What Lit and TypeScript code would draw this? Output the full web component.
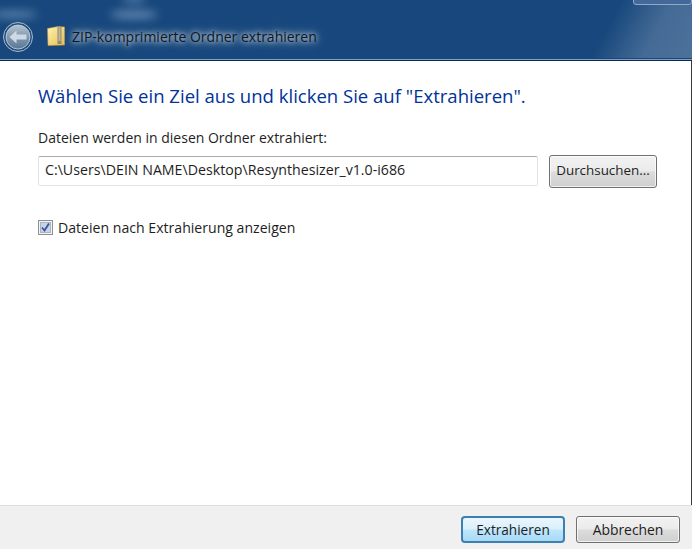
import { LitElement, html, css } from "lit";
import { customElement } from "lit/decorators.js";

@customElement("app-root")
export class AppRoot extends LitElement {
  static styles = css`
    :host {
      display: flex;
      flex-direction: column;
      width: 692px;
      height: 549px;
      overflow: hidden;
      background: #fff;
      font-family: "Open Sans", "Noto Sans", sans-serif;
      color: #1e1e1e;
      box-sizing: border-box;
    }
    .titlebar {
      position: relative;
      flex: none;
      height: 61px;
      box-sizing: border-box;
      display: flex;
      align-items: flex-start;
      padding: 22px 0 0 3px;
      overflow: hidden;
      background: #17477c;
      border-bottom: 1px solid #0e2a4a;
      box-shadow: inset 0 -1px 0 #7f9fc0;
    }
    .glare {
      position: absolute;
      inset: 0 0 2px 0;
      background: linear-gradient(118deg, transparent 86%, rgba(130, 155, 185, 0.42) 93%, rgba(130, 155, 185, 0.5) 100%);
    }
    .blur {
      position: absolute;
      border-radius: 50%;
      background: rgba(170, 195, 225, 0.5);
      filter: blur(5px);
    }
    .b1 { left: -10px; top: 11px; width: 48px; height: 7px; }
    .b2 { left: 110px; top: 10px; width: 48px; height: 9px; }
    .b3 { left: 122px; top: -5px; width: 24px; height: 7px; }
    .winbtn {
      position: absolute;
      right: 0;
      top: -6px;
      width: 59px;
      height: 11px;
      box-sizing: border-box;
      border: 1px solid #8fa9c6;
      border-radius: 3px;
      background: #44689a;
    }
    .back {
      position: relative;
      flex: none;
      width: 30px;
      height: 30px;
    }
    .back svg, .zip { display: block; }
    .zip {
      flex: none;
      position: relative;
      margin: 4px 0 0 14px;
    }
    .title {
      position: relative;
      margin: 5px 0 0 7px;
      font-size: 14px;
      line-height: 19px;
      color: #0d1826;
      white-space: nowrap;
      text-shadow: 0 0 5px rgba(255,255,255,.8), 0 0 9px rgba(255,255,255,.65), 0 0 14px rgba(255,255,255,.5);
    }
    .content {
      flex: 1;
      min-height: 0;
      box-sizing: border-box;
      padding: 22px 35px 0 38px;
      border-right: 1px solid #3a3a3a;
      display: flex;
      flex-direction: column;
    }
    h1 {
      margin: 0;
      font-weight: 400;
      font-size: 18.55px;
      line-height: 26px;
      color: #003399;
      white-space: nowrap;
    }
    .label {
      margin-top: 19px;
      font-size: 14px;
      line-height: 19px;
      white-space: nowrap;
    }
    .row {
      display: flex;
      align-items: flex-start;
      gap: 11px;
      margin-top: 9px;
    }
    .input {
      flex: none;
      width: 500px;
      height: 30px;
      box-sizing: border-box;
      border: 1px solid #e2e3e6;
      border-top-color: #ababab;
      border-radius: 2px;
      padding-left: 6px;
      font-size: 14.2px;
      line-height: 25px;
      white-space: nowrap;
    }
    .btn {
      flex: none;
      box-sizing: border-box;
      display: flex;
      align-items: center;
      justify-content: center;
      border: 1px solid #707070;
      border-radius: 3px;
      background: linear-gradient(#f2f2f2 0%, #ebebeb 48%, #dcdcdc 52%, #cfcfcf 100%);
      box-shadow: inset 0 0 0 1px rgba(255,255,255,.7);
      font-size: 13.6px;
      white-space: nowrap;
    }
    .browse { width: 108px; height: 33px; margin-top: -1px; font-size: 13.4px; padding-bottom: 4px; }
    .check {
      display: flex;
      align-items: center;
      gap: 5px;
      margin-top: 30px;
      font-size: 14.1px;
      line-height: 19px;
      white-space: nowrap;
    }
    .box { display: block; flex: none; }
    .footer {
      flex: none;
      height: 44px;
      box-sizing: border-box;
      display: flex;
      justify-content: flex-end;
      align-items: flex-start;
      gap: 11px;
      padding: 10px 12px 0 0;
      background: #f0f0f0;
      border-top: 1px solid #dfdfdf;
    }
    .action { height: 27px; }
    .primary {
      width: 104px;
      border-color: #3c7fb1;
      border-width: 2px;
      border-radius: 4px;
      background: linear-gradient(#eaf6fd 0%, #d9f0fc 48%, #bee6fd 52%, #a7d9f5 100%);
      box-shadow: none;
    }
    .secondary { width: 104px; font-size: 13.9px; }
  `;

  render() {
    return html`
      <div class="titlebar">
        <div class="glare"></div>
        <div class="blur b1"></div>
        <div class="blur b2"></div>
        <div class="blur b3"></div>
        <div class="winbtn"></div>
        <div class="back">
          <svg width="30" height="30" viewBox="0 0 30 30">
            <defs>
              <linearGradient id="bg" x1="0" y1="0" x2="0" y2="1">
                <stop offset="0" stop-color="#b4c2d0" />
                <stop offset=".5" stop-color="#8298b0" />
                <stop offset="1" stop-color="#587896" />
              </linearGradient>
            </defs>
            <circle cx="15" cy="15" r="14.5" fill="#24507f" stroke="#a9bbcd" stroke-width="1" />
            <circle cx="15" cy="15" r="12" fill="url(#bg)" stroke="#c8d4df" stroke-width="0.8" />
            <path d="M6.5 15 L13.5 8.5 L13.5 12.5 L23.5 12.5 L23.5 17.5 L13.5 17.5 L13.5 21.5 Z" fill="#cfd9e3" />
          </svg>
        </div>
        <svg class="zip" width="18" height="20" viewBox="0 0 18 20">
          <defs>
            <linearGradient id="fd" x1="0" y1="0" x2="1" y2="1">
              <stop offset="0" stop-color="#fdf3b4" />
              <stop offset="1" stop-color="#e9bd4e" />
            </linearGradient>
          </defs>
          <path d="M0.5 2.5 L11 0.5 L17.5 1 L17.5 19 L1 19.5 Z" fill="url(#fd)" stroke="#c99b35" stroke-width=".6" />
          <rect x="10.5" y="1" width="4" height="17" fill="#8f8a72" />
          <path d="M11.5 2h2M11.5 4h2M11.5 6h2M11.5 8h2M11.5 10h2M11.5 12h2M11.5 14h2" stroke="#ece6c6" stroke-width="1" />
        </svg>
        <div class="title">ZIP-komprimierte Ordner extrahieren</div>
      </div>
      <div class="content">
        <h1>Wählen Sie ein Ziel aus und klicken Sie auf "Extrahieren".</h1>
        <div class="label">Dateien werden in diesen Ordner extrahiert:</div>
        <div class="row">
          <div class="input">C:\\Users\\DEIN NAME\\Desktop\\Resynthesizer_v1.0-i686</div>
          <div class="btn browse">Durchsuchen...</div>
        </div>
        <div class="check">
          <svg class="box" width="15" height="15" viewBox="0 0 15 15">
            <rect x=".5" y=".5" width="14" height="14" fill="#f4f4f4" stroke="#8e8f8f" />
            <rect x="2.5" y="2.5" width="10" height="10" fill="#c9d3e6" stroke="#a9b4c8" />
            <path d="M4 7.5 L6.5 10.5 L11 3.5" fill="none" stroke="#3a5a9c" stroke-width="1.9" />
          </svg>
          <span>Dateien nach Extrahierung anzeigen</span>
        </div>
      </div>
      <div class="footer">
        <div class="btn action primary">Extrahieren</div>
        <div class="btn action secondary">Abbrechen</div>
      </div>
    `;
  }
}
